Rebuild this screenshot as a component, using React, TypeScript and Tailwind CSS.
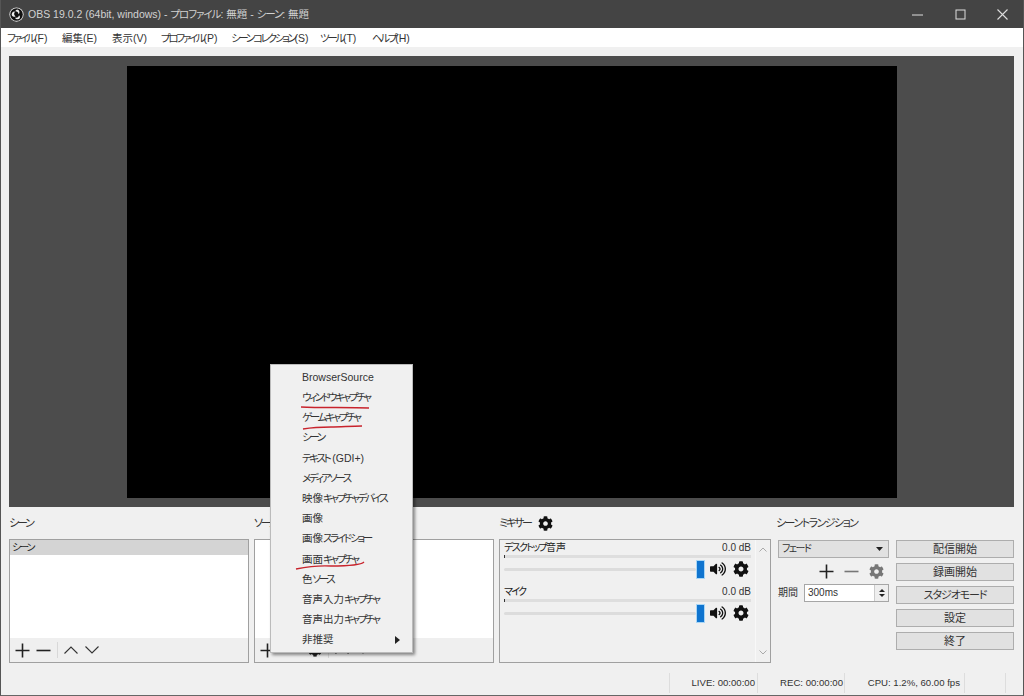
import { FaCog, FaVolumeUp } from 'react-icons/fa';

const font = "font-['Liberation_Sans','Noto_Sans_CJK_JP',sans-serif] [font-feature-settings:'palt']";

const menus = [
  { label: 'ファイル(F)', w: 'w-[55px]' },
  { label: '編集(E)', w: 'w-[50px]' },
  { label: '表示(V)', w: 'w-[49px]' },
  { label: 'プロファイル(P)', w: 'w-[70px]' },
  { label: 'シーンコレクション(S)', w: 'w-[89px]' },
  { label: 'ツール(T)', w: 'w-[52px]' },
  { label: 'ヘルプ(H)', w: 'w-[50px]' },
];

const sourceTypes = [
  'BrowserSource',
  'ウィンドウキャプチャ',
  'ゲームキャプチャ',
  'シーン',
  'テキスト (GDI+)',
  'メディアソース',
  '映像キャプチャデバイス',
  '画像',
  '画像スライドショー',
  '画面キャプチャ',
  '色ソース',
  '音声入力キャプチャ',
  '音声出力キャプチャ',
  '非推奨',
];

const buttons = ['配信開始', '録画開始', 'スタジオモード', '設定', '終了'];

// The original UI font has narrow kana, so only the kana runs get tightened
function Kana({ text, tight = 'tracking-[-0.25em]' }: { text: string; tight?: string }) {
  return (
    <span className="whitespace-nowrap">
      {text.split(/([ァ-ヶー]+)/).map((part, i) =>
        i % 2 === 1 ? (
          <span key={i} className={tight}>
            {part}
          </span>
        ) : (
          <span key={i}>{part}</span>
        ),
      )}
    </span>
  );
}

function ObsLogo() {
  return (
    <svg width="15" height="15" viewBox="0 0 16 16">
      <circle cx="8" cy="8" r="7.6" fill="#e8e8e8" />
      <circle cx="8" cy="8" r="6.7" fill="#111" />
      <path d="M8.6 2.6a3 3 0 0 1 1.6 5.2A3.6 3.6 0 0 0 6.6 4.6a3 3 0 0 1 2-2Z" fill="#eee" />
      <path d="M3.2 9.4a3 3 0 0 1 3.2-4.4 3.6 3.6 0 0 0 .6 5 3 3 0 0 1-3.8-.6Z" fill="#eee" />
      <path d="M11.6 11.8a3 3 0 0 1-5.2-.4 3.6 3.6 0 0 0 4.4-2.6 3 3 0 0 1 .8 3Z" fill="#eee" />
    </svg>
  );
}

function Plus({ color = '#222' }: { color?: string }) {
  return (
    <svg width="15" height="15" viewBox="0 0 15 15">
      <path d="M7.5 0.5v14M0.5 7.5h14" stroke={color} strokeWidth="1.6" />
    </svg>
  );
}

function Minus({ color = '#222' }: { color?: string }) {
  return (
    <svg width="15" height="15" viewBox="0 0 15 15">
      <path d="M0.5 7.5h14" stroke={color} strokeWidth="1.6" />
    </svg>
  );
}

function Chevron({ up }: { up?: boolean }) {
  return (
    <svg width="14" height="8" viewBox="0 0 14 8">
      <path d={up ? 'M0.5 7.5L7 1l6.5 6.5' : 'M0.5 0.5L7 7l6.5-6.5'} stroke="#333" strokeWidth="1.1" fill="none" />
    </svg>
  );
}

function ListToolbar({ gearBeforeSep }: { gearBeforeSep?: boolean }) {
  return (
    <div className="flex h-[24px] items-center bg-[#efefef] pl-[5px]">
      <Plus />
      <span className="ml-[6px]">
        <Minus />
      </span>
      {gearBeforeSep && <FaCog className="ml-[12px] text-[14px] text-[#222]" />}
      <span className="ml-[6px] h-[16px] w-px bg-[#d8d8d8]" />
      <span className="ml-[6px]">
        <Chevron up />
      </span>
      <span className="ml-[7px]">
        <Chevron />
      </span>
    </div>
  );
}

function MixerChannel({ name }: { name: string }) {
  return (
    <div className="h-[44px]">
      <div className="flex h-[14px] items-center justify-between px-[4px] text-[10px] leading-none text-[#222]">
        <Kana text={name} tight="tracking-[-0.17em]" />
        <span className="text-[#333]">0.0 dB</span>
      </div>
      <div className="mx-[4px] flex h-[3px] bg-[#dedede]">
        <span className="h-full w-px bg-[#333]" />
      </div>
      <div className="flex h-[22px] items-center pl-[4px]">
        <div className="h-[3px] w-[192px] rounded-sm bg-[#dcdcdc]" />
        <div className="h-[19px] w-[9px] border border-[#a9d6f5] bg-[#0f74cf]" />
        <FaVolumeUp className="ml-[5px] text-[16px] text-[#111]" />
        <FaCog className="ml-[7px] text-[16px] text-[#111]" />
      </div>
    </div>
  );
}

export default function App() {
  return (
    <div className={`relative flex h-[696px] w-[1024px] flex-col overflow-hidden border-x border-b border-x-[#555] border-b-[#666] bg-[#f0f0f0] ${font}`}>
      {/* Title bar */}
      <div className="-mx-px flex h-[28px] shrink-0 items-center bg-[#444444] pl-[9px]">
        <ObsLogo />
        <span className="ml-[4px] text-[10.5px] leading-none text-[#d2d2d2]">
          <Kana text="OBS 19.0.2 (64bit, windows) - プロファイル: 無題 - シーン: 無題" tight="tracking-[-0.1em]" />
        </span>
        <div className="ml-auto flex items-center pr-[10px]">
          <svg width="11" height="11" viewBox="0 0 11 11" className="mr-[32px]">
            <path d="M0 6h11" stroke="#ddd" strokeWidth="1" />
          </svg>
          <svg width="11" height="11" viewBox="0 0 11 11" className="mr-[31px]">
            <rect x="1" y="1" width="9" height="9" fill="none" stroke="#ddd" strokeWidth="1" />
          </svg>
          <svg width="11" height="11" viewBox="0 0 11 11" className="mr-[6px]">
            <path d="M0.5 0.5l10 10M10.5 0.5l-10 10" stroke="#ddd" strokeWidth="1.1" />
          </svg>
        </div>
      </div>

      {/* Menu bar */}
      <div className="flex h-[19px] shrink-0 items-center bg-white pl-[6px] pt-[1px] text-[10.5px] leading-none text-[#333]">
        {menus.map((m) => (
          <span key={m.label} className={m.w}>
            <Kana text={m.label} tight="tracking-[-0.22em]" />
          </span>
        ))}
      </div>

      {/* Preview */}
      <div className="ml-[8px] mr-[9px] mt-[9px] flex h-[451px] shrink-0 items-center justify-center bg-[#4c4c4c]">
        <div className="h-[432px] w-[770px] bg-black" />
      </div>

      {/* Docks */}
      <div className="ml-[8px] flex h-[156px] shrink-0 text-[11px] leading-none text-[#333]">
        <div className="w-[240px]">
          <div className="flex h-[32px] items-center pt-[1px]">
            <Kana text="シーン" tight="tracking-[-0.2em]" />
          </div>
          <div className="flex h-[124px] flex-col border border-[#a0a0a0] bg-white">
            <div className="flex h-[15px] items-center bg-[#d4d4d4] pl-[2px] text-[10px] text-[#222]">
              <Kana text="シーン" tight="tracking-[-0.2em]" />
            </div>
            <div className="flex-1" />
            <ListToolbar />
          </div>
        </div>

        <div className="ml-[5px] w-[240px]">
          <div className="flex h-[32px] items-center pt-[1px]">
            <Kana text="ソース" tight="tracking-[-0.2em]" />
          </div>
          <div className="flex h-[124px] flex-col border border-[#a0a0a0] bg-white">
            <div className="flex-1" />
            <ListToolbar gearBeforeSep />
          </div>
        </div>

        <div className="ml-[5px] w-[272px]">
          <div className="flex h-[32px] items-center gap-[7px] pt-[1px]">
            <Kana text="ミキサー" tight="tracking-[-0.2em]" />
            <FaCog className="text-[15px] text-[#111]" />
          </div>
          <div className="flex h-[124px] border border-[#a0a0a0] bg-[#f0f0f0]">
            <div className="flex-1 pt-[1px]">
              <MixerChannel name="デスクトップ音声" />
              <MixerChannel name="マイク" />
            </div>
            <div className="flex w-[15px] flex-col items-center justify-between border-l border-l-[#f8f8f8] py-[7px]">
              <svg width="8" height="5" viewBox="0 0 8 5">
                <path d="M0.5 4.5L4 1l3.5 3.5" stroke="#aaa" fill="none" />
              </svg>
              <svg width="8" height="5" viewBox="0 0 8 5">
                <path d="M0.5 0.5L4 4l3.5-3.5" stroke="#aaa" fill="none" />
              </svg>
            </div>
          </div>
        </div>

        <div className="ml-[7px] w-[236px]">
          <div className="-ml-[2px] flex h-[32px] items-center pt-[1px]">
            <Kana text="シーントランジション" tight="tracking-[-0.14em]" />
          </div>
          <div className="flex pt-px">
            <div className="w-[111px]">
              <div className="flex h-[18px] items-center justify-between border border-[#adadad] bg-[#e1e1e1] pl-[3px] pr-[5px] text-[10px]">
                <Kana text="フェード" tight="tracking-[-0.15em]" />
                <svg width="7" height="4" viewBox="0 0 7 4">
                  <path d="M0 0h7L3.5 4Z" fill="#222" />
                </svg>
              </div>
              <div className="flex h-[26px] items-center pl-[41px]">
                <Plus />
                <span className="ml-[10px]">
                  <Minus color="#777" />
                </span>
                <FaCog className="ml-[10px] text-[15px] text-[#777]" />
              </div>
              <div className="flex h-[18px] items-center">
                <span className="w-[26px] text-[10px]">期間</span>
                <div className="flex h-[18px] flex-1 items-center justify-between border border-[#a6a6a6] bg-white pl-[3px] text-[10px]">
                  300ms
                  <div className="flex h-full w-[14px] flex-col items-center justify-center gap-[2px] border-l border-l-[#ccc] bg-[#eee]">
                    <svg width="6" height="3" viewBox="0 0 6 3">
                      <path d="M0 3h6L3 0Z" fill="#222" />
                    </svg>
                    <svg width="6" height="3" viewBox="0 0 6 3">
                      <path d="M0 0h6L3 3Z" fill="#222" />
                    </svg>
                  </div>
                </div>
              </div>
            </div>
            <div className="ml-[7px] flex w-[118px] flex-col gap-[5px]">
              {buttons.map((b) => (
                <div key={b} className="flex h-[18px] items-center justify-center border border-[#adadad] bg-[#e1e1e1] text-[11px] text-[#333]">
                  <Kana text={b} tight="tracking-[-0.1em]" />
                </div>
              ))}
            </div>
          </div>
        </div>
      </div>

      {/* Status bar */}
      <div className="ml-[668px] flex flex-1 items-center pt-[8px] text-[9.6px] leading-none text-[#333]">
        <div className="flex h-[20px] w-[89px] items-center justify-end border-x border-x-[#ddd] pr-[2px]">LIVE: 00:00:00</div>
        <div className="flex h-[20px] w-[87px] items-center justify-end border-r border-r-[#ddd] pr-[1px]">REC: 00:00:00</div>
        <div className="flex h-[20px] w-[120px] items-center justify-end border-r border-r-[#ddd] pr-[4px]">CPU: 1.2%, 60.00 fps</div>
        <div className="h-[20px] w-[41px] border-r border-r-[#ddd]" />
      </div>

      {/* Add source menu */}
      <div className="absolute left-[269px] top-[364px] w-[143px] border border-[#bbb] bg-[#f0f0f0] pb-[2px] pt-[2px] text-[10.5px] leading-none text-[#333] shadow-[2px_2px_3px_rgba(0,0,0,0.45)]">
        {sourceTypes.map((s, i) => (
          <div key={s} className="flex h-[20.2px] items-center justify-between pl-[31px] pr-[12px]">
            <Kana text={s} tight="tracking-[-0.22em]" />
            {i === sourceTypes.length - 1 && (
              <svg width="5" height="8" viewBox="0 0 5 8">
                <path d="M0 0l5 4-5 4Z" fill="#222" />
              </svg>
            )}
          </div>
        ))}
        <svg width="143" height="289" viewBox="0 0 143 289" className="absolute left-0 top-0" fill="none" stroke="#c8232c" strokeWidth="1.3">
          <path d="M30 42c20 1 50 0 68 1" />
          <path d="M32 64c12-2 20-2 28-2 10 0 20-1 31-1" />
          <path d="M25 204c10-2 20-4 35-3 15 0 30-1 33-4" />
        </svg>
      </div>
    </div>
  );
}
